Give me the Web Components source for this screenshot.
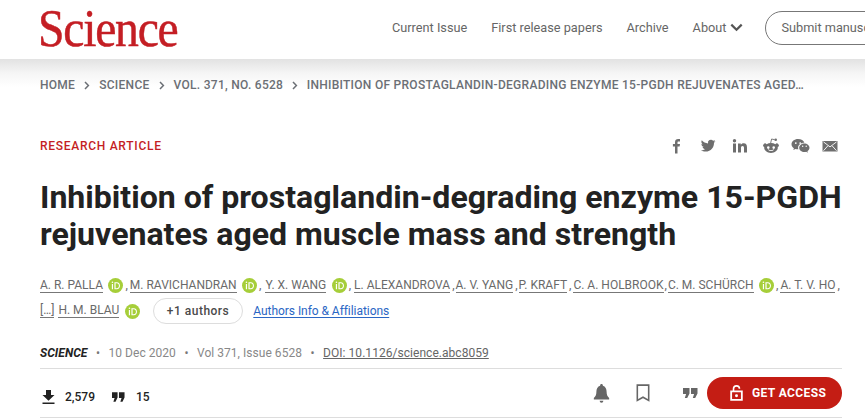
<!DOCTYPE html>
<html><head><meta charset="utf-8"><style>
html,body{margin:0;padding:0;background:#fff;overflow:hidden}
body{width:865px;height:419px;font-family:Roboto,"Liberation Sans",sans-serif}
</style></head><body>
<sci-header></sci-header>
<sci-crumbs></sci-crumbs>
<sci-article></sci-article>
<script>
function def(name,html){customElements.define(name,class extends HTMLElement{constructor(){super();this.attachShadow({mode:'open'}).innerHTML=html;}});}
const orcid=`<svg class="orcid" width="15" height="15" viewBox="0 0 14 14"><circle cx="7" cy="7" r="7" fill="#a6ce39"/><rect x="3.6" y="5.6" width="1.1" height="4.9" fill="#fff"/><circle cx="4.15" cy="3.9" r=".75" fill="#fff"/><path d="M6 3.9h2.2c1.9 0 3 1.5 3 3.3s-1.2 3.3-3 3.3H6zm1.1 1v4.6h1.1c1.3 0 2-1 2-2.3s-.8-2.3-2-2.3z" fill="#fff"/></svg>`;
const chev=`<svg width="6" height="9" viewBox="0 0 6 9"><path d="M1 1l3.4 3.500L1 8" fill="none" stroke="#6b6f75" stroke-width="1.500"/></svg>`;
def('sci-header',`<style>
:host{display:flex;align-items:center;height:59px;padding:0 0 4px 38px;box-sizing:border-box;white-space:nowrap;overflow:hidden;width:865px}
.logo{font:400 53px/59px "Liberation Serif",serif;color:#c41e24;letter-spacing:-1.400px;width:354px;flex:none;margin-top:1px;transform:scaleX(.9);transform-origin:0 50%;-webkit-text-stroke:.5px #c41e24}
nav{display:flex;align-items:center;font:400 12.730px/16px Roboto,sans-serif;color:#666;flex:none}
nav span{margin-right:24px}
.about{display:flex;align-items:center;gap:4px;margin-right:22px}
.btn{flex:none;height:34px;box-sizing:border-box;border:1px solid #777;border-radius:17px;padding:0 15px;display:flex;align-items:center;font:400 12.730px Roboto,sans-serif;color:#666}
</style><div class="logo">Science</div><nav><span>Current Issue</span><span>First release papers</span><span>Archive</span><div class="about">About <svg width="13" height="9" viewBox="0 0 13 9"><path d="M1.300 1.600 6.500 6.800l5.200-5.200" fill="none" stroke="#555" stroke-width="2.200"/></svg></div></nav><div class="btn">Submit manuscript</div>`);
def('sci-crumbs',`<style>
:host{display:flex;align-items:center;height:52px;padding:0 0 0 40px;box-sizing:border-box;background:linear-gradient(#e2e2e2,#f5f5f5 14px,#fff 28px);font:500 12px/16px Roboto,sans-serif;color:#6b6f75;letter-spacing:.28px;white-space:nowrap;width:865px}
svg{margin:0 9px;flex:none}
</style><span>HOME</span>${chev}<span>SCIENCE</span>${chev}<span>VOL. 371, NO. 6528</span>${chev}<span style="margin-left:-.5px">INHIBITION OF PROSTAGLANDIN-DEGRADING ENZYME 15-PGDH REJUVENATES AGED…</span>`);
def('sci-share',`<style>
:host{display:flex;align-items:center;margin-right:4px}
svg{display:block;flex:none;width:16px;height:16px;fill:#6e6e6e}
</style>
<svg viewBox="0 0 16 16"><path d="M6 15.500V8.600H3.900V6h2.100V4.200C6 2 7.300 1 9.200 1c.9 0 1.600.1 1.800.1v2.300H9.700c-1 0-1.200.5-1.200 1.200V6h2.500l-.4 2.600H8.500v6.900z"/></svg>
<svg viewBox="0 0 16 16" style="margin-left:15px"><path d="M15.500 3.200c-.6.200-1.200.4-1.800.5.600-.4 1.100-1 1.300-1.700-.6.300-1.200.6-1.900.7A3 3 0 0 0 8 5.400C5.500 5.300 3.300 4.100 1.800 2.300c-.8 1.400-.4 3.100.9 4-.5 0-.9-.1-1.300-.4 0 1.500 1 2.700 2.400 3-.4.100-.9.100-1.300 0 .4 1.200 1.500 2.100 2.800 2.100-1.300 1-2.900 1.400-4.400 1.300 1.300.9 2.900 1.300 4.600 1.300 5.600 0 8.700-4.700 8.500-8.900.6-.4 1.100-.9 1.500-1.500z"/></svg>
<svg viewBox="0 0 16 16" style="margin-left:16px"><path d="M1 5.500h3v9H1zM2.500 1a1.700 1.700 0 1 1 0 3.400 1.700 1.700 0 0 1 0-3.400zM6 5.500h2.800v1.300c.5-.9 1.500-1.500 2.800-1.500 2.700 0 3.400 1.700 3.400 4.100v5.100h-3V10c0-1.100-.2-2.100-1.400-2.100S9 8.800 9 10v4.500H6z"/></svg>
<svg viewBox="0 0 18 16" style="width:18px;margin-left:14px"><path d="M9 5c1.700 0 3.200.4 4.400 1.200a1.900 1.900 0 1 1 2.300 2.900c0 .2.100.5.100.7 0 2.800-3 5.100-6.800 5.100s-6.800-2.300-6.800-5.100c0-.2 0-.5.100-.7a1.900 1.900 0 1 1 2.300-2.900C5.800 5.400 7.300 5 9 5zM6.300 8.300a1.300 1.300 0 1 0 0 2.600 1.300 1.300 0 0 0 0-2.600zm5.400 0a1.300 1.300 0 1 0 0 2.600 1.300 1.300 0 0 0 0-2.600zM6 11.700c.8.900 1.900 1.300 3 1.300s2.200-.4 3-1.300l-.5-.4c-.7.600-1.600.9-2.500.9s-1.800-.3-2.500-.9z"/><path d="M8.600 5.300 9.600 1l3 .7" fill="none" stroke="#6e6e6e" stroke-width=".9"/><circle cx="13.700" cy="1.800" r="1.300"/></svg>
<svg viewBox="0 0 19 16" style="width:19px;margin-left:11px"><path d="M7 1C3.400 1 .5 3.300.5 6.200c0 1.600 1 3.100 2.400 4l-.6 1.900 2.200-1.200c.8.200 1.600.3 2.400.3h.5c-.2-.5-.3-1-.3-1.500 0-2.800 2.700-5 5.900-5h.4C12.800 2.600 10.200 1 7 1zM4.800 4.200a.9.900 0 1 1 0 1.800.9.900 0 0 1 0-1.800zm4.400 0a.9.900 0 1 1 0 1.800.9.900 0 0 1 0-1.800z"/><path d="M18.500 9.800c0-2.400-2.400-4.300-5.100-4.300-2.900 0-5.200 1.900-5.200 4.300s2.300 4.300 5.200 4.300c.6 0 1.200-.1 1.800-.3l1.700.9-.5-1.500c1.200-.8 2.100-2 2.100-3.400zM11.700 9a.7.700 0 1 1 0-1.400.7.700 0 0 1 0 1.400zm3.500 0a.7.700 0 1 1 0-1.400.7.700 0 0 1 0 1.400z"/></svg>
<svg viewBox="0 0 16 16" style="margin-left:12px"><path d="M.5 3h15v10.500H.5z" fill="#6e6e6e"/><path d="M1.500 3.900 8 8.900l6.500-5M1.500 12.700l4.500-5M14.500 12.700 10 7.700" fill="none" stroke="#fff" stroke-width=".9"/></svg>`);
def('sci-author',`<style>
:host{display:inline-flex;align-items:center;gap:5.500px}
.n{border-bottom:1px solid #777;line-height:13px}
svg{display:block}
</style><span class="n"><slot></slot></span>`+orcid);
def('sci-plain',`<style>:host{display:inline-flex;align-items:center}.n{border-bottom:1px solid #777;line-height:13px}</style><span class="n"><slot></slot></span>`);
def('sci-article',`<style>
:host{display:block;padding:0 23px 0 40px;width:865px;box-sizing:border-box;color:#1f1f1f}
.top{display:flex;justify-content:space-between;align-items:center;height:30px;margin-top:20px}
.kicker{font:500 12px/16px Roboto,sans-serif;color:#c41e24;letter-spacing:.72px}
h1{margin:18px -30px 0 0;font:700 32.080px/37px Roboto,sans-serif;color:#222;white-space:nowrap}
.authors{margin-top:25px;font:400 12px/13px Roboto,sans-serif;color:#6a6a6a;white-space:nowrap}
.line{display:flex;align-items:center;height:15px}
.line.l2{height:26px;margin-top:5px}
.comma{margin:0 2px}
.more{display:inline-flex;align-items:center;height:26px;box-sizing:border-box;border:1px solid #ddd;border-radius:13px;padding:0 13px;font:500 12px Roboto,sans-serif;color:#4a4a4a;margin-left:13px;letter-spacing:.5px}
a{color:#2a66c4;font:400 12px Roboto,sans-serif;margin-left:10px;text-decoration:underline;text-underline-offset:2px;letter-spacing:-.05px}
.meta{display:flex;align-items:center;margin-top:14px;height:30px;border-bottom:1px solid #ddd;font:400 12px Roboto,sans-serif;color:#888;white-space:nowrap;letter-spacing:.04px}
.meta b{font:italic 700 12px Roboto,sans-serif;color:#222}
.dot{margin:0 8.500px;color:#777}
.meta u{color:#666}
.stats{display:flex;align-items:center;height:48px;border-bottom:1px solid #ddd;font:500 12px Roboto,sans-serif;color:#222}
.stats .left{display:flex;align-items:center;flex:1;padding:8px 0 0 2px}
.right{display:flex;align-items:center}
.access{display:flex;align-items:center;gap:9px;width:135px;height:32px;padding-left:23px;background:#c41d14;border-radius:16px;color:#fff;font:700 12px Roboto,sans-serif;letter-spacing:.4px;box-sizing:border-box}
svg{display:block;flex:none}
</style>
<div class="top"><div class="kicker">RESEARCH ARTICLE</div><sci-share></sci-share></div>
<h1>Inhibition of prostaglandin-degrading enzyme 15-PGDH<br>rejuvenates aged muscle mass and strength</h1>
<div class="authors">
<div class="line"><sci-author>A. R. PALLA</sci-author><span class="comma">,</span><sci-author>M. RAVICHANDRAN</sci-author><span class="comma" style="margin-right:4px">,</span><sci-author>Y. X. WANG</sci-author><span class="comma" style="margin-right:3px">,</span><sci-plain>L. ALEXANDROVA</sci-plain><span class="comma" style="margin-right:1px">,</span><sci-plain>A. V. YANG</sci-plain><span class="comma" style="margin-right:1px">,</span><sci-plain>P. KRAFT</sci-plain><span class="comma">,</span><sci-plain>C. A. HOLBROOK</sci-plain><span class="comma" style="margin-right:1px;margin-left:1px">,</span><sci-author>C. M. SCHÜRCH</sci-author><span class="comma">,</span><sci-plain>A. T. V. HO</sci-plain><span class="comma">,</span></div>
<div class="line l2"><sci-plain>[…]</sci-plain><span style="width:4px"></span><sci-author>H. M. BLAU</sci-author><span class="more">+1 authors</span><a>Authors Info &amp; Affiliations</a></div>
</div>
<div class="meta"><b>SCIENCE</b><span class="dot">•</span><span>10 Dec 2020</span><span class="dot">•</span><span>Vol 371, Issue 6528</span><span class="dot">•</span><u>DOI: 10.1126/science.abc8059</u></div>
<div class="stats"><div class="left">
<svg width="13" height="14" viewBox="0 0 13 14" style="margin-right:10px"><path d="M4 0h5v5h3.500L6.500 10.800.5 5H4zM.5 12.400h12V14H.5z" fill="#222"/></svg><span>2,579</span>
<svg width="13" height="10" viewBox="0 0 14 10" style="margin:0 11px 0 17px"><path d="M0 0h6v5.500L3.800 10H1.500l1.300-4H0zM7.500 0h6v5.500L11.300 10H9l1.300-4H7.500z" fill="#222"/></svg><span>15</span></div>
<div class="right">
<svg width="17" height="21" viewBox="0 0 20 23" preserveAspectRatio="none" style="margin-right:26px"><path d="M10 1c1 0 1.600.7 1.600 1.500v.6c3 .8 4.400 3.400 4.400 6.400 0 3.500 1 5 3 7V18H1v-1.500c2-2 3-3.500 3-7 0-3 1.400-5.600 4.400-6.400v-.6C8.400 1.700 9 1 10 1zM7.800 19.500h4.400a2.200 2.200 0 0 1-4.400 0z" fill="#666"/></svg>
<svg width="14" height="18" viewBox="0 0 16 20" preserveAspectRatio="none" style="margin-right:33px"><path d="M1.500 1.200h13v17L8 14.700l-6.500 3.500z" fill="none" stroke="#666" stroke-width="1.800"/></svg>
<svg width="15" height="10" viewBox="0 0 15 10" style="margin-right:9px"><path d="M0 0h6.500v5.500L4.200 10H1.800l1.300-4H0zM8 0h6.500v5.500L12.200 10H9.800l1.300-4H8z" fill="#666"/></svg>
<div class="access"><svg width="13" height="16" viewBox="0 0 12 15"><path d="M1 6h10v8H1z" fill="none" stroke="#fff" stroke-width="1.700"/><path d="M3.200 6V3.600a2.800 2.800 0 0 1 5.600 0" fill="none" stroke="#fff" stroke-width="1.500"/><circle cx="6" cy="10" r="1.400" fill="#fff"/></svg><span>GET ACCESS</span></div>
</div></div>`);
</script>
</body></html>
